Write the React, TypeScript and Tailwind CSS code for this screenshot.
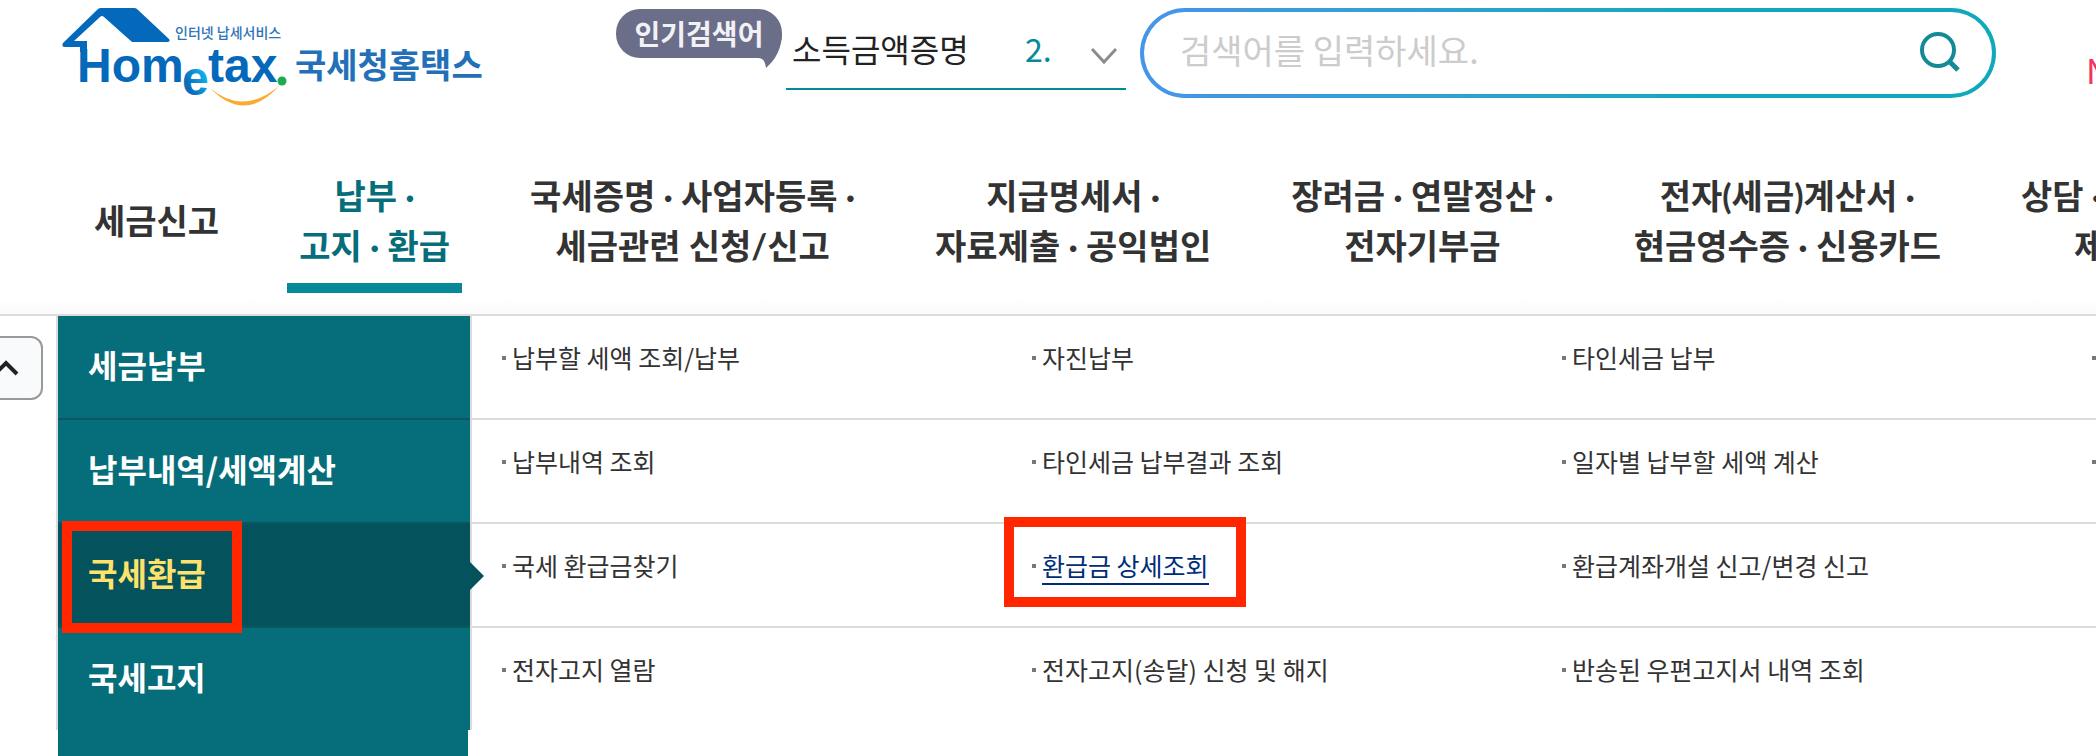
import React, { useState, ChangeEvent, FormEvent } from 'react';

interface NavItem {
  lines: string[];
  active?: boolean;
}

interface MenuLink {
  label: string;
  highlighted?: boolean;
}

interface MenuGroup {
  title: string;
  active?: boolean;
  links: MenuLink[];
}

const NAV_ITEMS: NavItem[] = [
  { lines: ['세금신고'] },
  { lines: ['납부 ·', '고지 · 환급'], active: true },
  { lines: ['국세증명 · 사업자등록 ·', '세금관련 신청/신고'] },
  { lines: ['지급명세서 ·', '자료제출 · 공익법인'] },
  { lines: ['장려금 · 연말정산 ·', '전자기부금'] },
  { lines: ['전자(세금)계산서 ·', '현금영수증 · 신용카드'] },
  { lines: ['상담 · 불복 ·', '제보'] },
];

const MENU_GROUPS: MenuGroup[] = [
  {
    title: '세금납부',
    links: [{ label: '납부할 세액 조회/납부' }, { label: '자진납부' }, { label: '타인세금 납부' }, { label: '' }],
  },
  {
    title: '납부내역/세액계산',
    links: [
      { label: '납부내역 조회' },
      { label: '타인세금 납부결과 조회' },
      { label: '일자별 납부할 세액 계산' },
      { label: '' },
    ],
  },
  {
    title: '국세환급',
    active: true,
    links: [
      { label: '국세 환급금찾기' },
      { label: '환급금 상세조회', highlighted: true },
      { label: '환급계좌개설 신고/변경 신고' },
    ],
  },
  {
    title: '국세고지',
    links: [{ label: '전자고지 열람' }, { label: '전자고지(송달) 신청 및 해지' }, { label: '반송된 우편고지서 내역 조회' }],
  },
];

const Logo: React.FC = () => (
  <a href="#home" aria-label="국세청홈택스" className="ml-[60px] shrink-0">
    <svg width="426" height="112" viewBox="60 0 426 112">
      <defs>
        <linearGradient id="logo-e" x1="0" y1="1" x2="1" y2="0">
          <stop offset="0.3" stopColor="#0a6cbb" />
          <stop offset="0.75" stopColor="#12b5ee" />
        </linearGradient>
      </defs>
      <path
        d="M63 43 L98 9 Q99 8 101 8 H134 Q136 8 137 9 L169 39 Q171 42 167 42 H132 L104 17 Q102 15 100 17 L74 41 H87 V52 H80 V47 H65 Q61 47 63 43 Z"
        fill="#0469ba"
      />
      <g fontFamily="'Liberation Sans', sans-serif" fontWeight="700" fontSize="48">
        <text x="77" y="82" fill="#0469ba">Hom</text>
        <text x="182" y="95" fill="url(#logo-e)">e</text>
        <text x="208" y="82" fill="#0469ba">tax</text>
      </g>
      <circle cx="282" cy="81" r="4.5" fill="#1cab4e" />
      <path d="M210 88 Q243 116 279 86 Q245 124 210 88 Z" fill="#fbab30" />
      <g fontFamily="'Noto Sans CJK KR', sans-serif">
        <text x="175" y="38" fontSize="14" fontWeight="500" fill="#2c73b8">인터넷 납세서비스</text>
        <text x="295" y="78" fontSize="34" fontWeight="700" fill="#2470b8">국세청홈택스</text>
      </g>
    </svg>
  </a>
);

const PopularKeyword: React.FC = () => (
  <div className="flex shrink-0 items-start">
    <div className="relative mt-[9px] flex h-[49px] w-[166px] items-center justify-center rounded-3xl bg-[#6b6e89] pb-0.5">
      <svg className="absolute right-0 top-6" width="26" height="36" viewBox="0 0 26 36">
        <path d="M26 0 C26 16 19 27 10 35 C9 28 7 25 2 25 V0 Z" fill="#6b6e89" />
      </svg>
      <span className="relative text-[28px] font-bold text-[#f2f2f6]">인기검색어</span>
    </div>
    <button
      type="button"
      className="ml-1 mt-3 flex h-[78px] w-[340px] items-center border-b-2 border-[#068a98] pb-1 pl-1.5 pr-2 text-left text-[32px] text-[#222]"
    >
      <span className="w-[233px]">소득금액증명</span>
      <span className="text-[#068a98]">2.</span>
      <svg className="ml-auto mt-4" width="28" height="18" viewBox="0 0 28 18" fill="none">
        <path d="M2 2 L14 15 L26 2" stroke="#8c8c8c" strokeWidth="3" />
      </svg>
    </button>
  </div>
);

const SearchBox: React.FC = () => {
  const [keyword, setKeyword] = useState<string>('');

  const handleSubmit = (e: FormEvent): void => {
    e.preventDefault();
  };

  return (
    <form
      onSubmit={handleSubmit}
      className="ml-[14px] mt-2 h-[90px] min-w-0 flex-1 rounded-full bg-linear-to-r from-[#4595ea] to-[#10a9bb] to-65% p-1"
    >
      <div className="flex h-full items-center rounded-full bg-white pl-9 pr-8">
        <input
          type="text"
          aria-label="검색어"
          value={keyword}
          onChange={(e: ChangeEvent<HTMLInputElement>) => setKeyword(e.target.value)}
          placeholder="검색어를 입력하세요."
          className="min-w-0 flex-1 bg-transparent pb-2 text-[34px] text-[#333] outline-none placeholder:text-[#ccc]"
        />
        <button type="submit" aria-label="검색">
          <svg width="42" height="42" viewBox="0 0 42 42" fill="none" stroke="#138a96" strokeWidth="4">
            <circle cx="20" cy="18" r="16" />
            <path d="M31 29 L40 38" strokeWidth="5" />
          </svg>
        </button>
      </div>
    </form>
  );
};

const MainNav: React.FC = () => (
  <nav className="h-[145px] shrink-0 border-b-2 border-[#dcdcdc] bg-linear-to-b from-white from-90% to-[#fafafa] font-[Lato,'Noto_Sans_CJK_KR',sans-serif]">
    <ul className="flex gap-14 pl-[82px]">
      {NAV_ITEMS.map((item) => (
        <li key={item.lines[0]} className="shrink-0">
          <a
            href="#menu"
            className={`flex h-[122px] flex-col items-center whitespace-nowrap px-3 text-[34px] font-bold leading-[50px] ${
              item.active ? 'border-b-10 border-[#068a98] text-[#066e7a]' : 'text-[#333]'
            } ${item.lines.length === 1 ? 'pt-[25px]' : ''}`}
          >
            {item.lines.map((line) => (
              <span key={line}>{line}</span>
            ))}
          </a>
        </li>
      ))}
    </ul>
  </nav>
);

const SideMenu: React.FC = () => (
  <aside className="flex w-[416px] shrink-0 flex-col">
    <ul className="border-x-2 border-[#dcdcdc]">
      {MENU_GROUPS.map((group, index) => (
        <li
          key={group.title}
          className={`relative box-content h-[102px] ${group.active ? 'bg-[#04535c]' : 'bg-[#066e7a]'} ${
            index < MENU_GROUPS.length - 1 ? 'border-b-2 border-[#09585f]' : ''
          }`}
        >
          <a
            href="#group"
            className={`block px-[30px] pt-6 text-[32px] font-bold leading-[48px] ${
              group.active ? 'text-[#ffe16b]' : 'text-white'
            }`}
          >
            {group.title}
          </a>
          {group.active && (
            <>
              <svg className="absolute -right-[14px] top-[38px] z-10" width="14" height="28" viewBox="0 0 14 28">
                <path d="M0 0 L14 14 L0 28 Z" fill="#04535c" />
              </svg>
              <div className="absolute -top-[3px] left-1 z-10 h-[112px] w-[180px] border-10 border-[#ff2600]" />
            </>
          )}
        </li>
      ))}
    </ul>
    <div className="ml-0.5 mr-1 min-h-6 flex-1 bg-[#066e7a]" />
  </aside>
);

const MenuLinks: React.FC = () => (
  <div className="min-w-0 flex-1 overflow-hidden">
    {MENU_GROUPS.map((group, index) => (
      <ul
        key={group.title}
        className={`grid h-[104px] grid-cols-[repeat(4,530px)] pl-[30px] pt-[22px] ${
          index < MENU_GROUPS.length - 1 ? 'border-b-2 border-[#dcdcdc]' : ''
        }`}
      >
        {group.links.map((link) => (
          <li key={link.label} className="relative flex h-10 items-center gap-1.5 text-[25px] text-[#333]">
            <span className="size-1 bg-[#777]" />
            {link.label && (
              <a
                href="#link"
                className={`border-b-2 leading-[32px] ${
                  link.highlighted ? 'mt-0.5 border-[#002d7a] pb-0.5 text-[#002d7a]' : 'border-transparent'
                }`}
              >
                {link.label}
              </a>
            )}
            {link.highlighted && (
              <div className="absolute -left-7 -top-[29px] h-[90px] w-[242px] border-10 border-[#ff2600]" />
            )}
          </li>
        ))}
      </ul>
    ))}
  </div>
);

const App: React.FC = () => {
  return (
    <div className="flex min-h-screen flex-col overflow-hidden bg-white font-['Noto_Sans_CJK_KR',sans-serif]">
      <header className="flex h-[171px] shrink-0 items-start">
        <Logo />
        <div className="ml-[130px] shrink-0">
          <PopularKeyword />
        </div>
        <SearchBox />
        <a href="#new" className="ml-[90px] mt-11 w-[10px] shrink-0 text-[34px] text-[#f0365f]">
          N
        </a>
      </header>
      <MainNav />
      <main className="flex flex-1">
        <div className="w-14 shrink-0">
          <button
            type="button"
            aria-label="이전"
            className="-ml-8 mt-5 flex h-16 w-[75px] items-center justify-center rounded-xl border-2 border-[#999] bg-[#f9fafc]"
          >
            <svg width="26" height="16" viewBox="0 0 26 16" fill="none">
              <path d="M2 14 L13 3 L24 14" stroke="#222" strokeWidth="4" />
            </svg>
          </button>
        </div>
        <SideMenu />
        <MenuLinks />
      </main>
    </div>
  );
};

export default App;
